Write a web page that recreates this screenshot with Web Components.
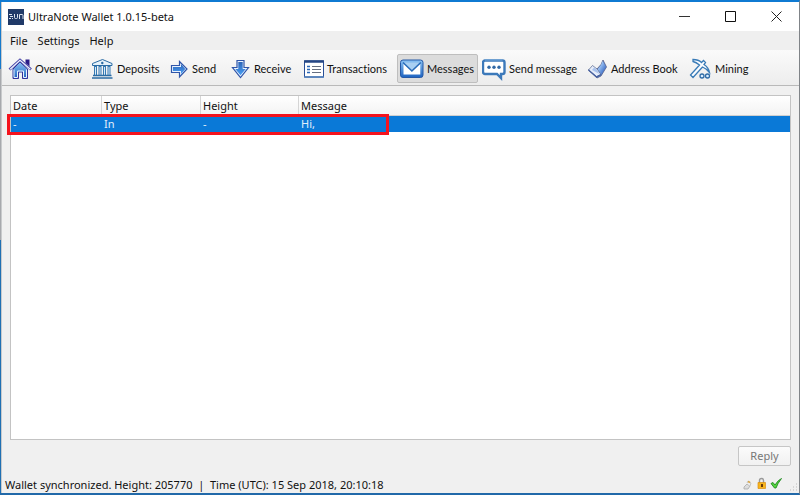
<!DOCTYPE html>
<html lang="en">
<head>
<meta charset="utf-8">
<title>UltraNote Wallet</title>
<style>
html,body{margin:0;height:100%}
body{font:11px/16px "Noto Sans","Open Sans",sans-serif;color:#111;background:#f0f0f0}
</style>
</head>
<body>
<wallet-window>
  <title-bar slot="title">UltraNote Wallet 1.0.15-beta</title-bar>
  <menu-bar slot="menu"></menu-bar>
  <tool-bar slot="tools">
    <tool-button icon="home" style="--w:82px">Overview</tool-button>
    <tool-button icon="bank" style="--w:75px">Deposits</tool-button>
    <tool-button icon="send" style="--w:62px">Send</tool-button>
    <tool-button icon="receive" style="--w:73px">Receive</tool-button>
    <tool-button icon="list" style="--w:100px">Transactions</tool-button>
    <tool-button icon="mail" style="--w:82px" active>Messages</tool-button>
    <tool-button icon="chat" style="--w:102px">Send message</tool-button>
    <tool-button icon="book" style="--w:104px">Address Book</tool-button>
    <tool-button icon="mine" style="--w:70px">Mining</tool-button>
  </tool-bar>
  <message-list></message-list>
  <reply-row></reply-row>
  <status-bar slot="status">Wallet synchronized. Height: 205770&nbsp; |&nbsp; Time (UTC): 15 Sep 2018, 20:10:18</status-bar>
</wallet-window>
<script>
const define = (name, html, setup) => customElements.define(name, class extends HTMLElement {
  connectedCallback() {
    if (this.shadowRoot) return;
    const root = this.attachShadow({mode: 'open'});
    root.innerHTML = html;
    if (setup) setup(this, root);
  }
});

const blueGradient = `<defs><linearGradient id="g" x1="0" y1="0" x2="0" y2="1"><stop offset="0" stop-color="#8cc4f4"/><stop offset="1" stop-color="#1c62c0"/></linearGradient><linearGradient id="v" x1="0" y1="0" x2="0" y2="1"><stop offset="0" stop-color="#2c64b8"/><stop offset="1" stop-color="#4aa0f4"/></linearGradient><linearGradient id="h" x1="0" y1="0" x2="1" y2="1"><stop offset="0" stop-color="#f4f8ff"/><stop offset=".4" stop-color="#8ab4ec"/><stop offset="1" stop-color="#1748b0"/></linearGradient></defs>`;

const icons = {
  home: `<path d="M17.500 2.500H21.500v7L17.500 6z" fill="#2a1c88"/><path d="M5 12 12 5l7.500 7v9.500h-5V15h-4v6.500H5z" fill="url(#g)" stroke="#33339b"/><path d="M6 12.500v8h3.500v-6.500h6v6.500h3v-8" fill="none" stroke="#e8f2ff"/><path d="M1.500 12.500 12 3l11 9.500" fill="none" stroke="#4a46a8" stroke-width="2.800"/><path d="M2.200 12.200 12 3.400l10.300 8.800" fill="none" stroke="#f0f6ff" stroke-width="1.200"/>`,
  bank: `<path d="M2.500 8.500v-2L12.500 2.500l9.500 4v2z" fill="#e6f2fa" stroke="#2b6ca4"/><circle cx="12.300" cy="6" r="1.200" fill="#2b6ca4"/><path d="M5.500 9v9M10 9v9M14.500 9v9M19 9v9" stroke="#3679b2" stroke-width="3"/><path d="M5.500 10v8M10 10v8M14.500 10v8M19 10v8" stroke="#d9edfa"/><path d="M3 18.500h18.500M2 21h20.500" stroke="#2b6ca4" stroke-width="1.300"/>`,
  send: `<path d="M6.500 8.500h8V4.500l7.500 7.500-7.500 8v-4.500h-8z" fill="#e8f2ff" stroke="#2f55a8" stroke-width="1.200"/><path d="M8 10h8V7l4.300 5-4.300 5v-3H8z" fill="url(#v)"/>`,
  receive: `<path d="M10 3.500h7v7h4.500L13.500 20.500 5.500 10.500H10z" fill="#e8f2ff" stroke="#2f55a8" stroke-width="1.200"/><path d="M11.300 5h4.400v7h3L13.500 18.300l-5.200-6.300h3z" fill="url(#v)"/>`,
  list: `<path d="M4.500 4h19v16h-19z" fill="#fff" stroke="#294f98"/><path d="M4 4.500h20" stroke="#254684" stroke-width="2.500"/><path d="M4 20h20" stroke="#4d7cba" stroke-width="1.500"/><path d="M7 9.500h3M7 12.500h3M7 15.500h3" stroke="#2866b6" stroke-width="1.500"/><path d="M12 9.500h9M12 12.500h9M12 15.500h9" stroke="#666f81"/>`,
  mail: `<rect x=".5" y="3" width="22.500" height="17.500" rx="2.500" fill="url(#g)" stroke="#2458a6"/><path d="M3.500 6h16.800v11.500H3.500z" fill="#fff"/><path d="m3 5.500 8.900 8.500L20.800 5.500z" fill="#a9d0f2"/><path d="m3 5.500 8.900 8.500 8.900-8.500" stroke="#286bb8" stroke-width="1.600"/>`,
  chat: `<path d="M3 3.500h17.500a2 2 0 0 1 2 2V15a2 2 0 0 1-2 2h-1.500v4L15 17H3a2 2 0 0 1-2-2V5.500a2 2 0 0 1 2-2z" fill="#fff" stroke="#3c79ba" stroke-width="2.400"/><path d="M3 3h17.500" stroke="#77aadb"/><circle cx="7" cy="10.300" r="1.700" fill="#3169a6"/><circle cx="12" cy="10.300" r="1.700" fill="#3169a6"/><circle cx="17" cy="10.300" r="1.700" fill="#3169a6"/>`,
  book: `<path d="m4.500 13 8.500-1 4-4.500 2-4.500 3.500 7-5.500 9-4 2z" fill="#5a82cc" stroke="#4a5278" stroke-width=".7"/><path d="m13.500 12.500 3.500-4.500 1.500-4 3.500 6-5 8z" fill="url(#h)"/><path d="m4.500 13 4-4.500 4.500 3.500 4 5.500-4.500 2z" fill="#e6edfa" stroke="#51638e" stroke-width=".7"/><path d="m4.500 13 8 7 4.500-2.500" stroke="#4660a0" stroke-width="1.200"/><path d="m8 13 2-2.500 3 2.500 2.500 4z" fill="#a9c2ec"/>`,
  mine: `<path d="M5 2.500c4 0 6.500 1 8.500 3l2-2 2 2-1.500 2c3 2 5 5 5.500 8-2-2.500-4-4.500-7-5.500L5 20.500 2.500 18 11.500 8C9 6 7 5 5 4.500z" fill="#f9fcff" stroke="#397bb7" stroke-width="1.300"/><circle cx="14" cy="19" r="2" fill="#dceeff" stroke="#306ca6" stroke-width="1.300"/><circle cx="19.500" cy="19" r="2" fill="#dceeff" stroke="#306ca6" stroke-width="1.300"/>`
};

define('wallet-window', `<style>
:host{display:flex;flex-direction:column;box-sizing:border-box;min-height:100vh;border-top:2px solid #0f7ad2;border-right:1px solid #808488;border-bottom:2px solid #2169a9;padding-left:2px;background:linear-gradient(90deg,transparent 1px,#c8cacc 1px 2px,#f0f0f0 2px),linear-gradient(#1679cb 67px,#a7a9ad 67px 238px,#2070b3 238px)}
main{flex:1;display:flex;flex-direction:column;padding:9px 8px 0}
</style><slot name="title"></slot><slot name="menu"></slot><slot name="tools"></slot><main><slot></slot></main><slot name="status"></slot>`);

define('title-bar', `<style>
:host{display:flex;align-items:center;height:29px;background:#fff;padding-left:6px;gap:4px}
.caption{flex:1;white-space:nowrap}
.controls{display:flex}
button{border:0;background:none;padding:0;width:46px;height:28px;display:grid;place-items:center;color:#222}
svg{display:block}
</style>
<svg width="16" height="16" viewBox="0 0 16 16" aria-hidden="true"><path d="M0 0h16v16H0z" fill="#203a68"/><path d="M1 5.500h3M2 7.500h3M1 9.500h2M4 9.500h1M6.500 5v3.500q0 1 1 1h1q1 0 1-1V5M11.500 10V5.500h2.500q1 0 1 1V10" fill="none" stroke="#dce3ee"/></svg>
<span class="caption"><slot></slot></span>
<span class="controls">
<button aria-label="Minimize"><svg width="11" height="11"><path d="M0 5.500h11" stroke="#333"/></svg></button>
<button aria-label="Maximize"><svg width="11" height="11"><path d="M.5.5h10v10H.5z" fill="none" stroke="#111"/></svg></button>
<button aria-label="Close"><svg width="11" height="11"><path d="m.5.5 10 10m0-10-10 10" stroke="#222"/></svg></button>
</span>`);

define('menu-bar', `<style>
:host{display:flex;height:19px;align-items:center;padding-left:8px;gap:10px;background:#efefef}
button{border:0;background:none;padding:0;font:inherit;color:inherit}
</style><button>File</button><button>Settings</button><button>Help</button>`);

define('tool-bar', `<style>
:host{display:flex;box-sizing:border-box;height:36px;padding:4px 0 0 3px;background:linear-gradient(#fafafa,#ededed);border-bottom:1px solid #b9b9b9;overflow:hidden}
</style><slot></slot>`);

define('tool-button', `<style>
:host{display:block;flex:none;width:var(--w);font-family:Lato,sans-serif;font-variant-ligatures:none}
button{display:flex;align-items:center;gap:3px;box-sizing:border-box;width:calc(100% - 1px);height:29px;padding:0 0 0 2px;border:1px solid transparent;border-radius:2px;background:none;font:inherit;font-variant-ligatures:none;color:#111;white-space:nowrap}
:host([active]) button{background:#dcdcdc;border-color:#bebebe}
svg{flex:none}
</style><button><svg width="24" height="24" viewBox="0 0 24 24" fill="none" aria-hidden="true"></svg><slot></slot></button>`,
(el, root) => { root.querySelector('svg').innerHTML = blueGradient + icons[el.getAttribute('icon')]; });

define('message-list', `<style>
:host{display:block;flex:1;position:relative;background:#fff;border:1px solid #c3c3c3}
table{width:100%;table-layout:fixed;border-collapse:separate;border-spacing:0}
th,td{padding:0 0 0 2px;text-align:left;font-weight:400;white-space:nowrap}
th{height:20px;box-sizing:border-box;border-bottom:1px solid #cfcfcf;background:linear-gradient(#fff,#f3f3f3);line-height:19px}
th+th{border-left:1px solid #d5d5d5}
td+td{padding-left:3px}
td{height:16px;line-height:16px;background:#0a79d7;color:#e2eefa}
.mark{position:absolute;left:-4px;top:18px;width:382px;height:21px;box-sizing:border-box;border:3px solid #f5131d}
</style><table><colgroup><col style="width:90px"><col style="width:99px"><col style="width:98px"><col></colgroup>
<thead><tr><th>Date</th><th>Type</th><th>Height</th><th>Message</th></tr></thead>
<tbody><tr><td>-</td><td>In</td><td>-</td><td>Hi,</td></tr></tbody></table><div class="mark"></div>`);

define('reply-row', `<style>
:host{display:flex;justify-content:flex-end;padding:6px 0 9px}
button{width:53px;height:20px;padding:0;border:1px solid #c6c6c6;border-radius:2px;background:linear-gradient(#fbfbfb,#f1f1f1);font:inherit;color:#777}
</style><button disabled>Reply</button>`);

define('status-bar', `<style>
:host{display:flex;align-items:center;box-sizing:border-box;height:18px;padding:2px 0 0 3px}
span{flex:1;white-space:nowrap}
svg{display:block}
</style><span><slot></slot></span>
<svg width="58" height="18" viewBox="0 0 58 18" fill="none" aria-hidden="true">
<path d="m3 11 3-3 3 2-2 3H3z" fill="#ddd" stroke="#aaa" stroke-width=".8"/><path d="m6 7 1-2 3 2-1 3" fill="#eee" stroke="#bbb" stroke-width=".8"/><path d="m7 5.500 2 1" stroke="#d9a441" stroke-width="1.500"/>
<path d="M18.500 7V4.500q0-2 2-2t2 2V7" stroke="#999" stroke-width="1.400"/><path d="M17 6.500h7.500v6H17z" fill="#f8b51c" stroke="#d88e12" stroke-width=".7"/><path d="M20 8h2v3h-2z" fill="#6b3b0a"/>
<path d="m30 7.500 2-1 2 2.500q3-5 6.500-6.500-4 5-5.500 9.500h-1.500z" fill="#54d53e" stroke="#218a22" stroke-width=".9"/>
<path d="M55 8h1M52 11h1M55 11h1M49 14h1M52 14h1M55 14h1" stroke="#bbb"/>
</svg>`);
</script>
</body>
</html>
